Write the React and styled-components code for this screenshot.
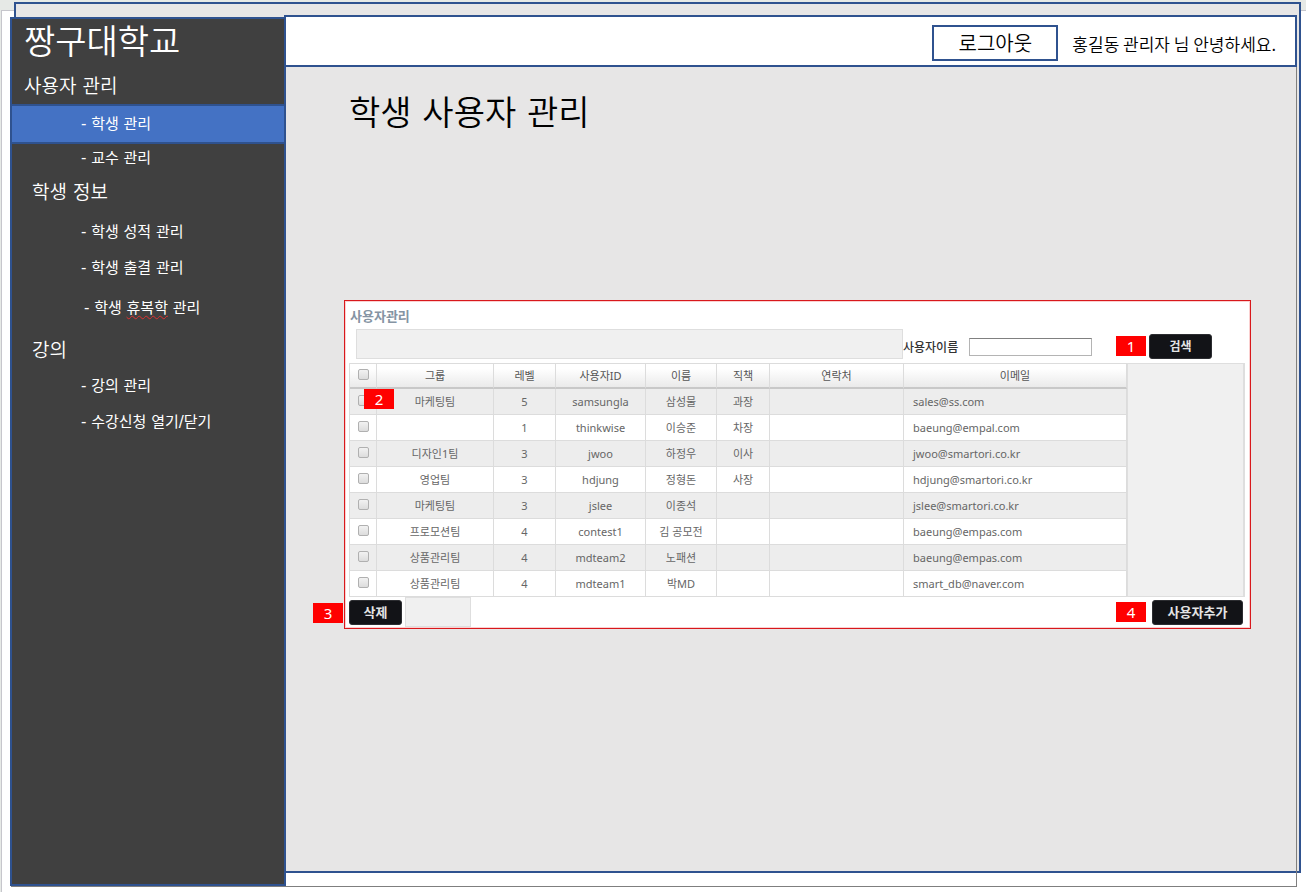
import React from 'react';
import styled, { createGlobalStyle } from 'styled-components';

const navy = '#2f528f';

const GlobalStyle = createGlobalStyle`
  * { box-sizing: border-box; }
  body {
    margin: 0;
    background: #e6e9e6;
    color: #000;
    font-family: 'Noto Sans CJK KR', sans-serif;
    font-weight: 350;
  }
  button, input { font: inherit; }
`;

const Page = styled.div`
  display: grid;
  min-height: 100vh;
  & > * { grid-area: 1 / 1; }
`;

const Canvas = styled.div`
  margin: 10px 0 0 1px;
  border: solid #c6c6cc;
  border-width: 1px 0 0 1px;
  background: #fff;
`;

const Backdrop = styled.div`
  margin: 2px 5px 19px 14px;
  border: 2px solid ${navy};
  background: #e7e6e6;
`;

const Outline = styled.div`
  margin: 17px 9px 5px 11px;
  border: 1px solid #7f7f7f;
`;

const Shell = styled.div`
  display: grid;
  grid-template-columns: 276px 1fr;
  margin: 15px 9px 6px 10px;
`;

const Sidebar = styled.nav`
  margin-top: 2px;
  border: 2px solid ${navy};
  background: #404040;
  color: #fff;
  font-family: 'DejaVu Sans', 'Noto Sans CJK KR', sans-serif;
`;

const Brand = styled.div`
  padding-left: 12px;
  margin-bottom: 3px;
  font-size: 34px;
  line-height: 46px;
`;

const Group = styled.section`
  margin-bottom: 2px;
`;

const GroupTitle = styled.h2`
  margin: 0;
  padding-left: ${(p) => (p.$inset ? 20 : 12)}px;
  font-size: 19px;
  font-weight: 350;
  line-height: 36px;
`;

const NavList = styled.ul`
  margin: 0;
  padding: ${(p) => (p.$spaced ? 4 : 0)}px 0 0;
  list-style: none;
`;

const rowHeights = { tight: 28, normal: 36, active: 40, loose: 44 };

const NavLink = styled.a`
  display: flex;
  align-items: center;
  height: ${(p) => rowHeights[p.$size || 'normal']}px;
  padding-left: ${(p) => (p.$size === 'loose' ? 72 : 69)}px;
  border: solid ${navy};
  border-width: ${(p) => (p.$size === 'active' ? 2 : 0)}px 0;
  background: ${(p) => (p.$size === 'active' ? '#4472c4' : 'transparent')};
  color: #fff;
  font-size: 15px;
  font-weight: 400;
  line-height: 20px;
  white-space: pre;
  text-decoration: none;
`;

const Misspelled = styled.span`
  text-decoration: underline wavy #e03030 1px;
  text-underline-offset: 2px;
`;

const Content = styled.div`
  display: flex;
  flex-direction: column;
`;

const TopBar = styled.header`
  display: flex;
  align-items: flex-end;
  justify-content: flex-end;
  gap: 14px;
  height: 52px;
  margin-left: -2px;
  padding: 0 19px 4px 0;
  border: 2px solid ${navy};
  background: #fff;
`;

const LogoutButton = styled.button`
  width: 126px;
  height: 36px;
  padding: 0;
  border: 2px solid ${navy};
  background: #fff;
  color: #000;
  font-size: 20px;
  line-height: 32px;
`;

const Greeting = styled.span`
  font-size: 17px;
  line-height: 34px;
`;

const Main = styled.main`
  padding: 21px 46px 40px 58px;
`;

const Heading = styled.h1`
  margin: 0 0 162px 5px;
  font-family: 'DejaVu Sans', 'Noto Sans CJK KR', sans-serif;
  font-size: 34px;
  font-weight: 350;
  line-height: 50px;
`;

const Panel = styled.section`
  position: relative;
  padding: 4px 5px 1px 4px;
  border: 1px solid #d8181c;
  box-shadow: inset 0 0 0 1px #fbd0d0;
  background: #fff;
`;

const PanelTitle = styled.h3`
  margin: 0;
  padding-left: 1px;
  color: #8594a3;
  font-size: 13px;
  font-weight: 700;
  line-height: 22px;
`;

const SearchRow = styled.form`
  display: flex;
  align-items: center;
  margin: 2px 33px 4px 7px;
`;

const FilterBar = styled.div`
  flex: 1;
  height: 30px;
  border: 1px solid #dedede;
  background: #f0f0f0;
`;

const SearchLabel = styled.label`
  width: 66px;
  margin-top: 6px;
  color: #333;
  font-size: 12px;
  font-weight: 500;
  line-height: 18px;
`;

const SearchInput = styled.input`
  width: 123px;
  height: 18px;
  margin: 6px 24px 0 0;
  padding: 0 4px;
  border: 1px solid #b4b4b4;
  border-top-color: #808080;
  background: #fff;
  font-size: 11px;
`;

const Marker = styled.span`
  flex: none;
  width: 30px;
  height: 20px;
  background: #f00;
  color: #fff;
  font-family: 'Noto Sans', sans-serif;
  font-size: 15px;
  font-weight: 400;
  line-height: 20px;
  text-align: center;
`;

const FloatingMarker = styled(Marker)`
  position: absolute;
  left: ${(p) => p.$left}px;
  top: ${(p) => p.$top}px;
`;

const DarkButton = styled.button`
  width: ${(p) => p.$width}px;
  height: 25px;
  padding: 0;
  border: 1px solid #2c2d31;
  border-radius: 3px;
  background: #121317;
  color: #e4e4e4;
  font-size: ${(p) => (p.$small ? 12 : 13)}px;
  font-weight: 700;
  line-height: 22px;
`;

const SearchButton = styled(DarkButton)`
  margin: 4px 0 0 3px;
`;

const SearchMarker = styled(Marker)`
  margin-top: 4px;
`;

const DataArea = styled.div`
  display: flex;
`;

const Table = styled.table`
  flex: 1;
  min-width: 0;
  table-layout: fixed;
  border-collapse: separate;
  border-spacing: 0;
  border-left: 1px solid #dcdcdc;
  color: #666;
  font-family: 'Noto Sans', 'Noto Sans CJK KR', sans-serif;
  font-size: 11px;
  font-weight: 400;
`;

const HeadCell = styled.th`
  height: 26px;
  padding: 0;
  border: solid #dcdcdc;
  border-width: 1px 1px 2px 0;
  border-bottom-color: #c8c8c8;
  background: linear-gradient(#fff 20%, #eaeaea);
  color: #555;
  font-weight: 400;
  line-height: 22px;
`;

const Row = styled.tr`
  background: #fff;
  &:nth-child(odd) { background: #ededed; }
`;

const Cell = styled.td`
  height: 26px;
  padding: ${(p) => (p.$start ? '0 0 0 9px' : 0)};
  border: solid #dcdcdc;
  border-width: 0 1px 1px 0;
  line-height: 22px;
  text-align: ${(p) => (p.$start ? 'left' : 'center')};
`;

const Check = styled.input`
  appearance: none;
  display: block;
  width: 11px;
  height: 11px;
  margin: 0 auto 3px;
  border: 1px solid #b0b0b0;
  border-radius: 2px;
  background: linear-gradient(#f2f2f2, #dcdcdc);
  &:checked { background: #666; }
`;

const SideBlock = styled.div`
  width: 118px;
  border: 1px solid #dedede;
  border-width: 1px 2px 1px 1px;
  background: #f0f0f0;
`;

const Footer = styled.div`
  display: flex;
  align-items: center;
  height: 30px;
  padding-right: 2px;
`;

const FooterBlock = styled.div`
  width: 66px;
  height: 30px;
  margin: 0 auto 0 3px;
  border: 1px solid #dedede;
  background: #f0f0f0;
`;

const AddMarker = styled(Marker)`
  margin-right: 6px;
`;

const widths = [27, 117, 62, 90, 71, 53, 134];
const columns = ['그룹', '레벨', '사용자ID', '이름', '직책', '연락처', '이메일'];
const users = [
  ['마케팅팀', '5', 'samsungla', '삼성물', '과장', '', 'sales@ss.com'],
  ['', '1', 'thinkwise', '이승준', '차장', '', 'baeung@empal.com'],
  ['디자인1팀', '3', 'jwoo', '하정우', '이사', '', 'jwoo@smartori.co.kr'],
  ['영업팀', '3', 'hdjung', '정형돈', '사장', '', 'hdjung@smartori.co.kr'],
  ['마케팅팀', '3', 'jslee', '이종석', '', '', 'jslee@smartori.co.kr'],
  ['프로모션팀', '4', 'contest1', '김 공모전', '', '', 'baeung@empas.com'],
  ['상품관리팀', '4', 'mdteam2', '노패션', '', '', 'baeung@empas.com'],
  ['상품관리팀', '4', 'mdteam1', '박MD', '', '', 'smart_db@naver.com'],
];

function Navigation() {
  return (
    <Sidebar>
      <Brand>짱구대학교</Brand>
      <Group>
        <GroupTitle>사용자 관리</GroupTitle>
        <NavList>
          <li><NavLink href="#students" $size="active" aria-current="page">- 학생 관리</NavLink></li>
          <li><NavLink href="#professors" $size="tight">- 교수 관리</NavLink></li>
        </NavList>
      </Group>
      <Group>
        <GroupTitle $inset>학생 정보</GroupTitle>
        <NavList $spaced>
          <li><NavLink href="#grades">- 학생 성적 관리</NavLink></li>
          <li><NavLink href="#attendance">- 학생 출결 관리</NavLink></li>
          <li><NavLink href="#leave" $size="loose">- 학생 <Misspelled>휴복학</Misspelled> 관리</NavLink></li>
        </NavList>
      </Group>
      <Group>
        <GroupTitle $inset>강의</GroupTitle>
        <NavList>
          <li><NavLink href="#lectures">- 강의 관리</NavLink></li>
          <li><NavLink href="#enrolment">- 수강신청 열기/닫기</NavLink></li>
        </NavList>
      </Group>
    </Sidebar>
  );
}

function UserTable() {
  return (
    <Table>
      <colgroup>
        {widths.map((w, i) => <col key={i} width={w} />)}
        <col />
      </colgroup>
      <thead>
        <tr>
          <HeadCell><Check type="checkbox" aria-label="전체 선택" /></HeadCell>
          {columns.map((c) => <HeadCell key={c}>{c}</HeadCell>)}
        </tr>
      </thead>
      <tbody>
        {users.map((user) => (
          <Row key={user[2]}>
            <Cell><Check type="checkbox" aria-label={user[2]} /></Cell>
            {user.map((value, i) => <Cell key={i} $start={i === 6}>{value}</Cell>)}
          </Row>
        ))}
      </tbody>
    </Table>
  );
}

export default function App() {
  return (
    <>
      <GlobalStyle />
      <Page>
        <Canvas />
        <Backdrop />
        <Outline />
        <Shell>
          <Navigation />
          <Content>
            <TopBar>
              <LogoutButton type="button">로그아웃</LogoutButton>
              <Greeting>홍길동 관리자 님 안녕하세요.</Greeting>
            </TopBar>
            <Main>
              <Heading>학생 사용자 관리</Heading>
              <Panel>
                <PanelTitle>사용자관리</PanelTitle>
                <SearchRow onSubmit={(e) => e.preventDefault()}>
                  <FilterBar />
                  <SearchLabel htmlFor="user-name">사용자이름</SearchLabel>
                  <SearchInput id="user-name" type="text" />
                  <SearchMarker>1</SearchMarker>
                  <SearchButton type="submit" $width={63} $small>검색</SearchButton>
                </SearchRow>
                <DataArea>
                  <UserTable />
                  <SideBlock />
                </DataArea>
                <Footer>
                  <DarkButton type="button" $width={53}>삭제</DarkButton>
                  <FooterBlock />
                  <AddMarker>4</AddMarker>
                  <DarkButton type="button" $width={91}>사용자추가</DarkButton>
                </Footer>
                <FloatingMarker $left={19} $top={88}>2</FloatingMarker>
                <FloatingMarker $left={-32} $top={302}>3</FloatingMarker>
              </Panel>
            </Main>
          </Content>
        </Shell>
      </Page>
    </>
  );
}
